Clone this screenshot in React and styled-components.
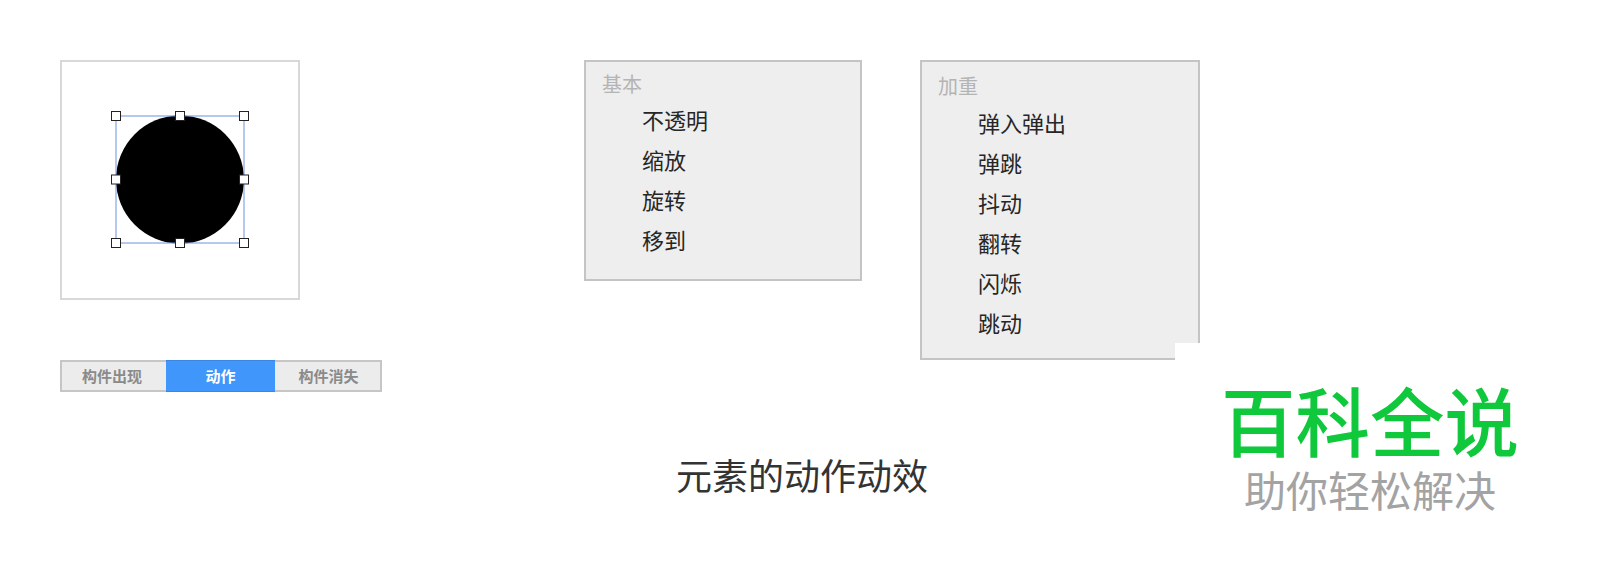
import React from "react";
import styled, { createGlobalStyle } from "styled-components";

const cjk = `"Noto Sans CJK SC", "Noto Sans", sans-serif`;

const GlobalStyle = createGlobalStyle`
  html, body {
    margin: 0;
    background: #fff;
    font-family: ${cjk};
  }
`;

const Page = styled.div`
  position: relative;
  width: 1600px;
  height: 562px;
  overflow: hidden;
  box-sizing: border-box;
  padding: 60px 0 0 60px;
`;

const Top = styled.div`
  display: flex;
  align-items: flex-start;
  height: 332px;
`;

const LeftColumn = styled.div`
  width: 524px;
  display: flex;
  flex-direction: column;
  gap: 60px;
`;

const Artboard = styled.div`
  width: 240px;
  height: 240px;
  box-sizing: border-box;
  border: 2px solid #d8d8d8;
`;

const Tabs = styled.div`
  display: flex;
  width: 322px;
  height: 32px;
`;

const Tab = styled.div`
  width: ${(p) => p.$width}px;
  box-sizing: border-box;
  display: flex;
  align-items: center;
  justify-content: center;
  padding-bottom: 2px;
  font-size: 15px;
  font-weight: 700;
  color: ${(p) => (p.$active ? "#fff" : "#8a8a8a")};
  background: ${(p) => (p.$active ? "#4096fb" : "#ececec")};
  border: 2px solid ${(p) => (p.$active ? "#3a86e0" : "#c6c6c6")};
  ${(p) => (p.$active ? "border-width: 1px 0;" : "")}
  ${(p) => (p.$first ? "border-right: 0; padding-right: 4px;" : "")}
  ${(p) => (p.$last ? "border-left: 0; padding-left: 2px;" : "")}
`;

const Menu = styled.div`
  width: ${(p) => p.$width}px;
  height: ${(p) => p.$height}px;
  margin-left: ${(p) => p.$gap || 0}px;
  box-sizing: border-box;
  background: #eeeeee;
  border: 2px solid #c4c4c4;
  padding: ${(p) => p.$top}px 0 0 16px;
`;

const MenuTitle = styled.div`
  font-size: 20px;
  line-height: 25px;
  color: #b4b4b4;
  margin-bottom: ${(p) => p.$below}px;
`;

const MenuItem = styled.div`
  font-size: 22px;
  line-height: 40px;
  color: #262626;
  padding-left: 40px;
`;

const Caption = styled.div`
  width: 1484px;
  text-align: center;
  margin-top: 56px;
  font-size: 36px;
  line-height: 52px;
  color: #333;
`;

const Watermark = styled.div`
  position: absolute;
  left: 1175px;
  top: 343px;
  width: 425px;
  height: 219px;
  box-sizing: border-box;
  padding: 36px 0 0 46px;
  background: #fff;
`;

const Brand = styled.div`
  font-size: 74.5px;
  line-height: 80px;
  font-weight: 500;
  color: #0fc83c;
  white-space: nowrap;
`;

const Slogan = styled.div`
  margin: 5px 0 0 23px;
  font-size: 42px;
  line-height: 50px;
  color: #a3a3a3;
  white-space: nowrap;
`;

const handleXs = [116, 180, 244];
const handleYs = [116, 179.5, 243];
const handles = handleXs
  .flatMap((x) => handleYs.map((y) => [x, y]))
  .filter(([x, y]) => !(x === 180 && y === 179.5));

function ShapeDrawing() {
  return (
    <svg width="236" height="236" viewBox="62 62 236 236" style={{ display: "block" }}>
      <circle cx="180" cy="179.5" r="64" fill="#000" />
      <rect x="116" y="116" width="128" height="127" fill="none" stroke="#6f92dc" strokeWidth="1" />
      {handles.map(([x, y]) => (
        <rect
          key={`${x}-${y}`}
          x={x - 4.5}
          y={y - 4.5}
          width="9"
          height="9"
          fill="#fff"
          stroke="#222"
          strokeWidth="1"
        />
      ))}
    </svg>
  );
}

const basic = ["不透明", "缩放", "旋转", "移到"];
const heavy = ["弹入弹出", "弹跳", "抖动", "翻转", "闪烁", "跳动"];

export default function App() {
  return (
    <Page>
      <GlobalStyle />
      <Top>
        <LeftColumn>
          <Artboard>
            <ShapeDrawing />
          </Artboard>
          <Tabs>
            <Tab $width={106} $first>构件出现</Tab>
            <Tab $width={109} $active>动作</Tab>
            <Tab $width={107} $last>构件消失</Tab>
          </Tabs>
        </LeftColumn>
        <Menu $width={278} $height={221} $top={9}>
          <MenuTitle $below={3}>基本</MenuTitle>
          {basic.map((item) => (
            <MenuItem key={item}>{item}</MenuItem>
          ))}
        </Menu>
        <Menu $width={280} $height={300} $gap={58} $top={11}>
          <MenuTitle $below={4}>加重</MenuTitle>
          {heavy.map((item) => (
            <MenuItem key={item}>{item}</MenuItem>
          ))}
        </Menu>
      </Top>
      <Caption>元素的动作动效</Caption>
      <Watermark>
        <Brand>百科全说</Brand>
        <Slogan>助你轻松解决</Slogan>
      </Watermark>
    </Page>
  );
}
